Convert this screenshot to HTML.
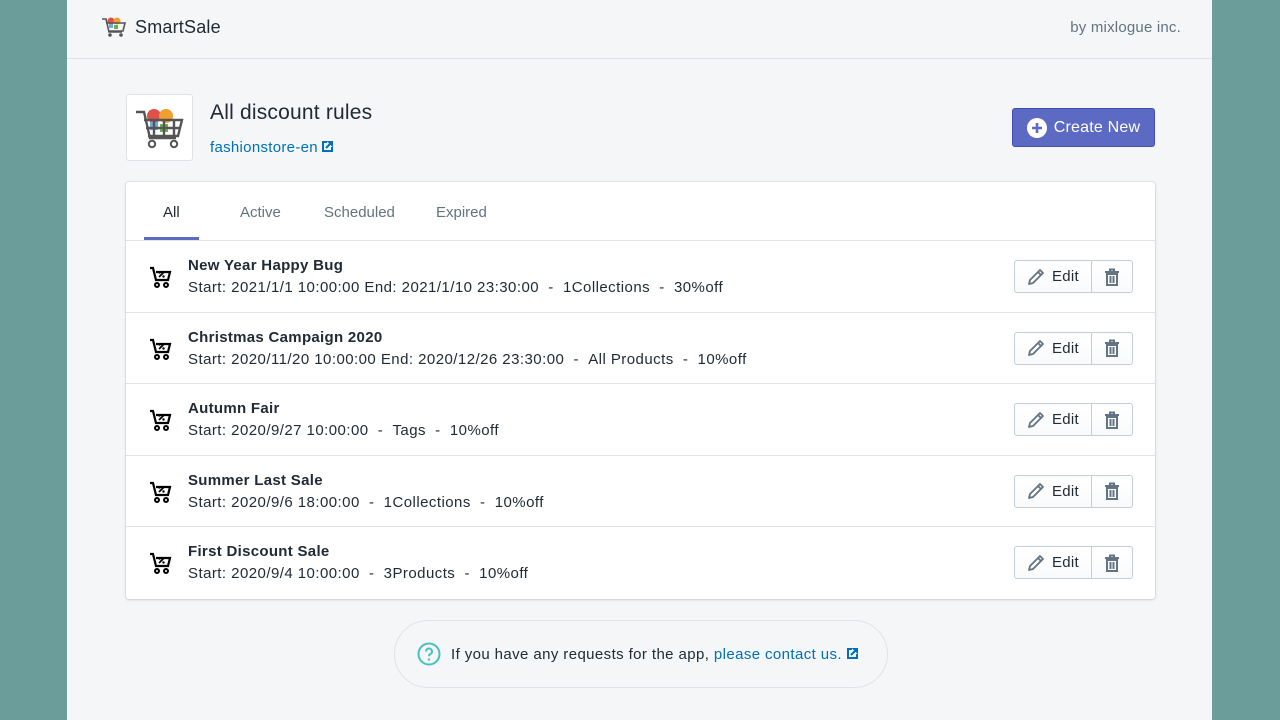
<!DOCTYPE html>
<html><head><meta charset="utf-8"><style>
*{box-sizing:border-box;margin:0;padding:0}
body{width:1280px;height:720px;background:#6b9d9a;font-family:"Liberation Sans",sans-serif;color:#212b36;overflow:hidden;position:relative}
.page{position:absolute;left:67px;top:0;width:1145px;height:720px;background:#f4f6f8}
.hdr{height:59px;border-bottom:1px solid #dfe3e8;position:relative}
.brand{position:absolute;left:34px;top:16px;font-size:18px;display:flex;align-items:center;gap:8px;letter-spacing:.2px}
.by{position:absolute;right:31px;top:19px;font-size:15px;color:#637381;letter-spacing:.2px}
.logo{position:absolute;left:59px;top:94px;width:67px;height:67px;background:#fff;border:1px solid #dfe3e8;border-radius:3px;display:flex;align-items:center;justify-content:center}
.title{position:absolute;left:143px;top:101px;font-size:21px;letter-spacing:.2px}
.link{position:absolute;left:143px;top:139px;font-size:15px;color:#006fbb;letter-spacing:.3px}
.btn{position:absolute;left:945px;top:108px;width:143px;height:39px;background:#5c6ac4;border:1px solid #3f4eae;border-radius:3px;color:#fff;font-size:16px;display:flex;align-items:center;justify-content:center;gap:7px;letter-spacing:.2px}
.card{position:absolute;left:59px;top:182px;width:1029px;height:417px;background:#fff;border-radius:3px;box-shadow:0 0 0 1px rgba(63,63,68,.08),0 1px 3px rgba(63,63,68,.15)}
.tabs{height:59px;border-bottom:1px solid #dfe3e8;position:relative;font-size:15px;color:#637381}
.tabs span{position:absolute;top:22px}
.ul{position:absolute;left:18px;top:55px;width:55px;height:3px;background:#5c6ac4}
.row{height:71.6px;border-bottom:1px solid #dfe3e8;position:relative}
.row:last-child{border-bottom:none}
.ic{position:absolute;left:22px;top:24px}
.n{position:absolute;left:62px;top:16px;font-size:15px;font-weight:bold;letter-spacing:.3px}
.d{position:absolute;left:62px;top:38px;font-size:15px;letter-spacing:.45px}
.act{position:absolute;left:888px;top:19px;height:33px;display:flex;border:1px solid #c4cdd5;border-radius:3px;background:linear-gradient(#fff,#f9fafb)}
.e{width:77px;display:flex;align-items:center;justify-content:center;gap:7px;font-size:15px;border-right:1px solid #c4cdd5;letter-spacing:.3px}
.t{width:40px;display:flex;align-items:center;justify-content:center}
.foot{position:absolute;left:327px;top:620px;width:494px;height:68px;border:1px solid #dfe3e8;border-radius:34px;display:flex;align-items:center;padding-left:22px;font-size:15px;gap:10px;letter-spacing:.4px}
</style></head><body><div class="page">
<div class="hdr"><div class="brand"><svg width="26" height="22" viewBox="0 0 26 22"><circle cx="10" cy="5" r="3.5" fill="#e0514b"/><circle cx="16" cy="5" r="3.5" fill="#f0a030"/><rect x="8" y="8" width="4" height="4" fill="#6fa8dc"/><rect x="13" y="9" width="4" height="4" fill="#6ab04c"/><path d="M1 3h4l3 13h13M5 7h19l-2 8H7" fill="none" stroke="#555" stroke-width="1.6"/><circle cx="9" cy="19" r="1.8" fill="#555"/><circle cx="20" cy="19" r="1.8" fill="#555"/></svg>SmartSale</div><div class="by">by mixlogue inc.</div></div>
<div class="logo"><svg width="52" height="44" viewBox="0 0 26 22"><circle cx="10" cy="5" r="3.5" fill="#e0514b"/><circle cx="16" cy="5" r="3.5" fill="#f0a030"/><rect x="8" y="8" width="4" height="4" fill="#6fa8dc"/><rect x="13" y="9" width="4" height="4" fill="#6ab04c"/><path d="M1 3h4l3 13h13M5 7h19l-2 8H7M10 7v8M15 7v8M20 7v8M6 11h17" fill="none" stroke="#555" stroke-width="1.2"/><circle cx="9" cy="19" r="1.6" fill="none" stroke="#555"/><circle cx="20" cy="19" r="1.6" fill="none" stroke="#555"/></svg></div>
<div class="title">All discount rules</div>
<div class="link">fashionstore-en <svg width="11" height="11" viewBox="0 0 11 11"><path d="M5 1H1v9h9V6" fill="none" stroke="#006fbb" stroke-width="2"/><path d="M6 0h5v5zM10 1 4 7" fill="#006fbb" stroke="#006fbb" stroke-width="2"/></svg></div>
<div class="btn"><svg width="20" height="20" viewBox="0 0 20 20"><circle cx="10" cy="10" r="10" fill="#fff"/><path d="M10 5v10M5 10h10" stroke="#5c6ac4" stroke-width="2.6"/></svg>Create New</div>
<div class="card">
<div class="tabs"><span style="left:37px;color:#212b36">All</span><span style="left:114px">Active</span><span style="left:198px">Scheduled</span><span style="left:310px">Expired</span><div class="ul"></div></div>
<div id="rows"></div>
</div>
<div class="foot"><svg width="24" height="24" viewBox="0 0 24 24"><circle cx="12" cy="12" r="10.5" fill="none" stroke="#47c1bf" stroke-width="2"/><path d="M9 9.5a3 3 0 1 1 4 2.8c-.8.4-1 1-1 2" fill="none" stroke="#47c1bf" stroke-width="2"/><circle cx="12" cy="17.5" r="1.2" fill="#47c1bf"/></svg><span>If you have any requests for the app, <span style="color:#006fbb">please contact us.</span> <svg width="11" height="11" viewBox="0 0 11 11"><path d="M5 1H1v9h9V6" fill="none" stroke="#006fbb" stroke-width="2"/><path d="M6 0h5v5zM10 1 4 7" fill="#006fbb" stroke="#006fbb" stroke-width="2"/></svg></span></div>
</div>
<script>
var d=[["New Year Happy Bug","Start: 2021/1/1 10:00:00 End: 2021/1/10 23:30:00 &nbsp;- &nbsp;1Collections &nbsp;- &nbsp;30%off"],["Christmas Campaign 2020","Start: 2020/11/20 10:00:00 End: 2020/12/26 23:30:00 &nbsp;- &nbsp;All Products &nbsp;- &nbsp;10%off"],["Autumn Fair","Start: 2020/9/27 10:00:00 &nbsp;- &nbsp;Tags &nbsp;- &nbsp;10%off"],["Summer Last Sale","Start: 2020/9/6 18:00:00 &nbsp;- &nbsp;1Collections &nbsp;- &nbsp;10%off"],["First Discount Sale","Start: 2020/9/4 10:00:00 &nbsp;- &nbsp;3Products &nbsp;- &nbsp;10%off"]];
var h="";d.forEach(function(r){h+='<div class="row"><svg class="ic" width="24" height="24" viewBox="0 0 24 24"><path d="M2 3h3l3 12h12l2-8H8" fill="none" stroke="#000" stroke-width="2.2"/><path d="M11 12l5-5" stroke="#000" stroke-width="1.8"/><circle cx="11.5" cy="7.5" r="1.2"/><circle cx="15.5" cy="11.5" r="1.2"/><circle cx="9" cy="20" r="2" fill="none" stroke="#000" stroke-width="2"/><circle cx="18" cy="20" r="2" fill="none" stroke="#000" stroke-width="2"/></svg><div class="n">'+r[0]+'</div><div class="d">'+r[1]+'</div><div class="act"><div class="e"><svg width="18" height="18" viewBox="0 0 18 18"><path d="M2 16l1-4L13 2l3 3L6 15z M11 4l3 3" fill="none" stroke="#637381" stroke-width="1.8" stroke-linejoin="round"/></svg>Edit</div><div class="t"><svg width="16" height="18" viewBox="0 0 16 18"><path d="M1 4h14M6 4V1.5h4V4M3 6h10v11H3zM6.5 8v7M9.5 8v7" fill="none" stroke="#637381" stroke-width="2"/></svg></div></div></div>'});
document.getElementById("rows").innerHTML=h;
</script>
</body></html>
